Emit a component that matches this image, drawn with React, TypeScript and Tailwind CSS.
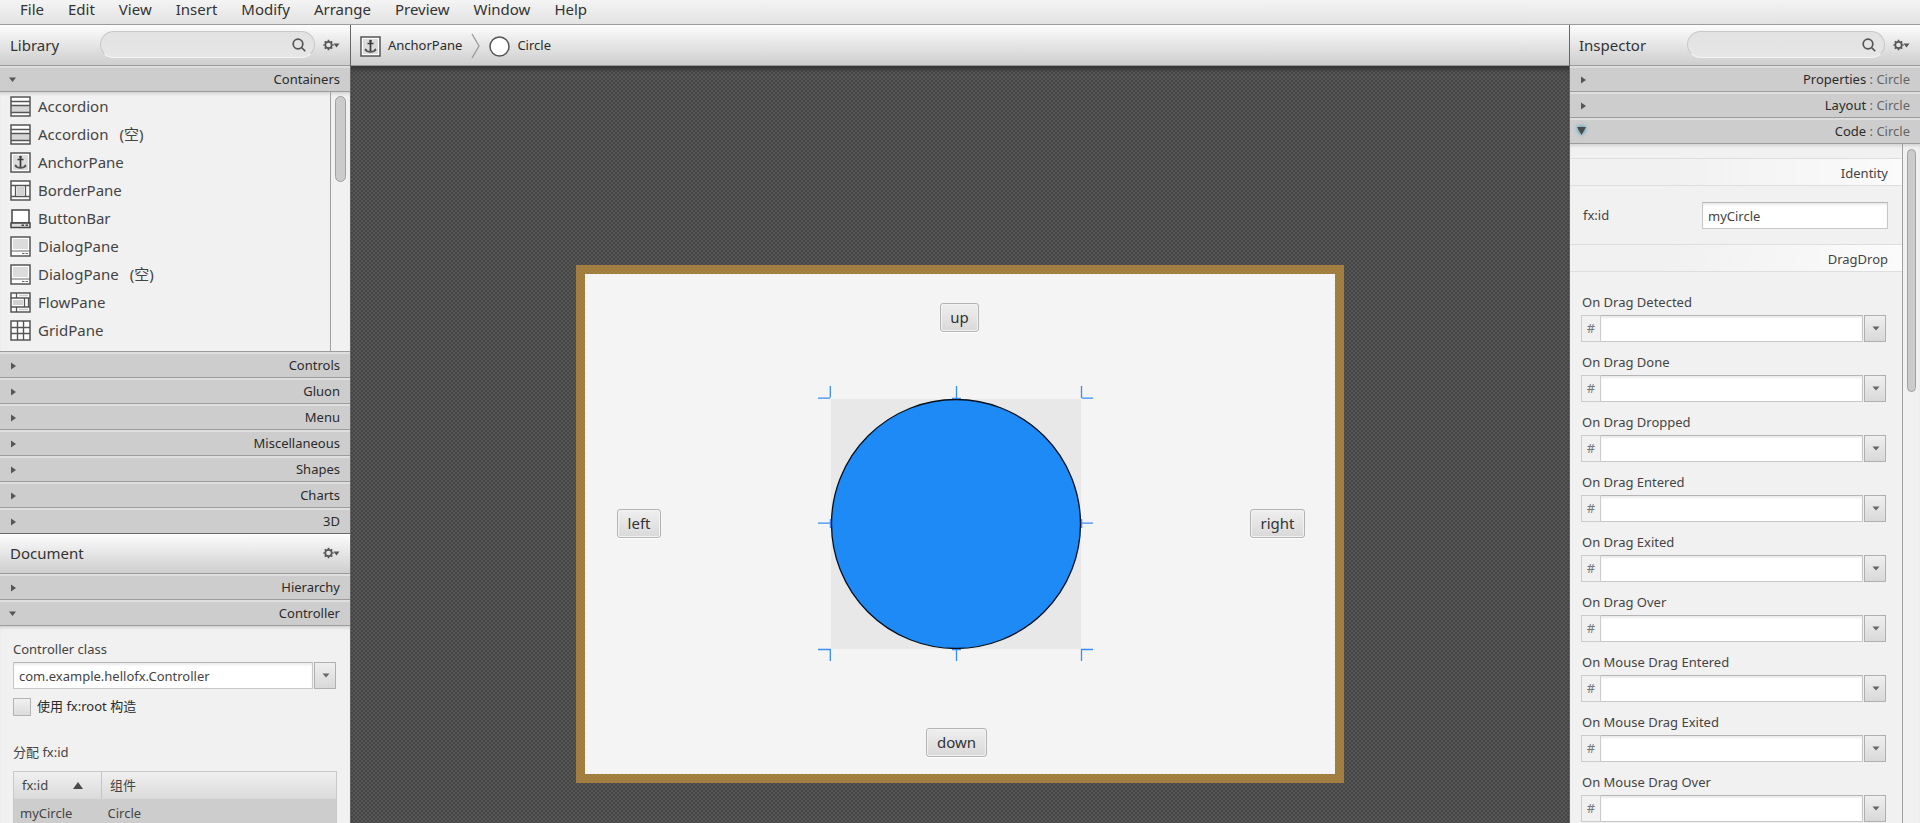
import React from "react";

const menus = ["File", "Edit", "View", "Insert", "Modify", "Arrange", "Preview", "Window", "Help"];

type IconKind = "accordion" | "anchor" | "border" | "buttonbar" | "dialog" | "flow" | "grid" | "circle";

const containers: { name: string; empty?: boolean; icon: IconKind }[] = [
  { name: "Accordion", icon: "accordion" },
  { name: "Accordion", empty: true, icon: "accordion" },
  { name: "AnchorPane", icon: "anchor" },
  { name: "BorderPane", icon: "border" },
  { name: "ButtonBar", icon: "buttonbar" },
  { name: "DialogPane", icon: "dialog" },
  { name: "DialogPane", empty: true, icon: "dialog" },
  { name: "FlowPane", icon: "flow" },
  { name: "GridPane", icon: "grid" },
];

const sections = ["Controls", "Gluon", "Menu", "Miscellaneous", "Shapes", "Charts", "3D"];

const events = [
  "On Drag Detected",
  "On Drag Done",
  "On Drag Dropped",
  "On Drag Entered",
  "On Drag Exited",
  "On Drag Over",
  "On Mouse Drag Entered",
  "On Mouse Drag Exited",
  "On Mouse Drag Over",
];

function NodeIcon({ kind }: { kind: IconKind }) {
  const frame = <rect x="1" y="1" width="19" height="19" fill="#fff" stroke="#555" strokeWidth="1.5" />;
  return (
    <svg viewBox="0 0 21 21" className="size-[21px] shrink-0" aria-hidden="true">
      {kind !== "circle" && kind !== "buttonbar" && frame}
      {kind === "accordion" && (
        <g stroke="#555" strokeWidth="1.3">
          <rect x="2" y="10" width="17" height="6" fill="#d6d6d6" stroke="none" />
          <path d="M1 5.5H20M1 9.5H20M1 16.5H20" />
        </g>
      )}
      {kind === "anchor" && (
        <g>
          <rect x="3" y="3" width="15" height="15" fill="#dcdcdc" />
          <path d="M10.5 4V16M7.5 7.5H13.5" fill="none" stroke="#3a3a3a" strokeWidth="1.7" />
          <path d="M5.3 13.5C7 16.6 14 16.6 15.7 13.5" fill="none" stroke="#555" strokeWidth="1.6" />
          <circle cx="10.5" cy="5" r="1.2" fill="#3a3a3a" />
          <path d="M4.5 14.5L5.3 12.2L7.3 14ZM16.5 14.5L15.7 12.2L13.7 14Z" fill="#555" />
        </g>
      )}
      {kind === "border" && (
        <g stroke="#555" strokeWidth="1.3">
          <path d="M1 5.5H20M1 16.5H20M5.500 5V17M15.500 5V17" />
          <rect x="7" y="7" width="7" height="8" fill="#d2d2d2" stroke="none" />
        </g>
      )}
      {kind === "buttonbar" && (
        <g stroke="#444" strokeWidth="1.5">
          <rect x="2" y="2" width="17" height="13" fill="#fff" />
          <rect x="1" y="15" width="19" height="4.500" fill="#ddd" />
          <path d="M11.500 17.200H14M15.500 17.200H18" />
        </g>
      )}
      {kind === "dialog" && (
        <g stroke="#666" strokeWidth="1.2">
          <rect x="3" y="3" width="15" height="10" fill="#dcdcdc" stroke="none" />
          <path d="M1 15H20M12 17.500H14.500M15.500 17.500H18" />
        </g>
      )}
      {kind === "flow" && (
        <g stroke="#555" strokeWidth="1.3">
          <path d="M1 6H20M1 15H20M6.500 1V6M14.500 6V15M18.500 6V15M6.500 15V20" />
          <rect x="3" y="8" width="10" height="5" fill="#d2d2d2" stroke="none" />
          <path d="M9 3.500H18M9 17.500H18" stroke="#ccc" />
        </g>
      )}
      {kind === "grid" && <path d="M1 7.500H20M1 13.500H20M7.500 1V20M13.500 1V20" stroke="#555" strokeWidth="1.4" />}
      {kind === "circle" && <circle cx="10.500" cy="10.500" r="9.500" fill="#fff" stroke="#555" strokeWidth="1.500" />}
    </svg>
  );
}

function GearButton({ label }: { label: string }) {
  return (
    <button aria-label={label} className="flex h-5 w-[18px] shrink-0 items-center">
      <svg viewBox="0 0 18 12" className="h-3 w-[18px]">
        <circle cx="5.500" cy="6" r="3.200" fill="none" stroke="#555" strokeWidth="1.700" />
        <path
          d="M5.500 0.800V2.200M5.500 9.800V11.200M0.300 6H1.700M9.300 6H10.700M1.800 2.300L2.800 3.300M8.200 8.700L9.200 9.700M9.200 2.300L8.200 3.300M2.800 8.700L1.800 9.700"
          stroke="#555"
          strokeWidth="1.700"
        />
        <path d="M10.500 4.500H16.500L13.500 8.500Z" fill="#555" />
      </svg>
    </button>
  );
}

function SearchField({ label }: { label: string }) {
  return (
    <label className="flex h-[27px] items-center rounded-full border border-[#c8c8c8] border-b-[#f4f4f4] bg-gradient-to-b from-[#e2e2e2] to-[#e6e6e6] pr-2 pl-3">
      <input aria-label={label} className="h-5 min-w-0 flex-1 bg-transparent text-[13px] outline-none" />
      <svg viewBox="0 0 14 14" className="size-[14px] shrink-0" fill="none" stroke="#555" strokeWidth="1.700">
        <circle cx="6" cy="6" r="4.800" />
        <path d="M9.500 9.500L13.200 13.200" />
      </svg>
    </label>
  );
}

function SectionTitle({
  title,
  subject,
  open,
  focused,
  last,
}: {
  title: string;
  subject?: string;
  open?: boolean;
  focused?: boolean;
  last?: boolean;
}) {
  return (
    <button
      aria-expanded={!!open}
      className={`flex h-[26px] w-full shrink-0 items-center justify-between border-t-2 border-b border-t-[#dedede] bg-[#cdcdcd] pr-[10px] pl-2 text-[13px] text-[#2b2b2b] ${
        last ? "border-b-[#6a6a6a]" : "border-b-[#9c9c9c]"
      }`}
    >
      <svg viewBox="0 0 10 10" className={focused ? "size-[10px] overflow-visible drop-shadow-[0_0_2px_#0096c9]" : "size-[10px]"}>
        {open ? (
          <path d={focused ? "M-1 0H8L3.500 8Z" : "M1 2.500H8L4.500 7Z"} fill={focused ? "#4a4a4a" : "#555"} />
        ) : (
          <path d="M3 1.500L8 5L3 8.500Z" fill="#555" />
        )}
      </svg>
      <span>
        {title}
        {subject && <span className="text-[#666]"> : {subject}</span>}
      </span>
    </button>
  );
}

function DropButton({ label }: { label: string }) {
  return (
    <button aria-label={label} className="ml-px flex h-[27px] w-[22px] shrink-0 items-center justify-center border border-[#b0b0b0] bg-gradient-to-b from-[#efefef] to-[#d9d9d9] pl-[2px]">
      <svg viewBox="0 0 8 5" className="h-[5px] w-2">
        <path d="M0.500 0.500H7.500L4 4.500Z" fill="#666" />
      </svg>
    </button>
  );
}

function GroupBand({ title }: { title: string }) {
  return (
    <h3 className="flex h-7 items-center justify-end border-y border-[#dedede] bg-gradient-to-r from-[#f1f1f1] from-30% to-[#fbfbfb] pt-1 pr-[14px] text-[13px] text-[#444]">
      {title}
    </h3>
  );
}

function EventField({ name }: { name: string }) {
  const id = name.toLowerCase().replace(/ /g, "-");
  return (
    <div className="h-[60px]">
      <label htmlFor={id} className="block h-[23px] pl-px text-[13px] leading-5 text-[#444]">
        {name}
      </label>
      <div className="flex">
        <span className="flex h-[27px] w-5 items-center justify-center border border-[#ccc] text-[13px] text-[#777]">#</span>
        <input
          id={id}
          className="h-[27px] min-w-0 flex-1 border border-l-0 border-[#c8c8c8] border-t-[#b5b5b5] bg-white px-1 text-[13px] shadow-[inset_0_2px_2px_#ececec] outline-none"
        />
        <DropButton label={`${name} options`} />
      </div>
    </div>
  );
}

function StageButton({ text, place }: { text: string; place: string }) {
  return (
    <button
      className={`absolute flex h-[29px] items-center justify-center rounded-[3px] border border-[#b4b4b4] bg-gradient-to-b from-[#efefef] to-[#d9d9d9] text-[15px] text-[#333] shadow-[0_1px_0_#fff,inset_0_0_0_1px_#f2f2f2] ${place}`}
    >
      {text}
    </button>
  );
}

function Stage() {
  return (
    <div className="relative h-[518px] w-[768px] shrink-0 border-9 border-[#d99d37]/60 bg-[#f4f4f4] bg-clip-padding">
      <StageButton text="up" place="top-[29px] left-[355px] w-[39px]" />
      <StageButton text="left" place="top-[235px] left-[32px] w-11" />
      <StageButton text="right" place="top-[235px] left-[665px] w-[55px]" />
      <StageButton text="down" place="top-[454px] left-[341px] w-[61px]" />
      <svg viewBox="0 0 280 280" className="absolute top-[110px] left-[231px] size-[280px]">
        <rect x="15" y="15" width="250" height="250" fill="#e8e8e8" />
        <circle cx="140" cy="140" r="124.500" fill="#1e8af5" stroke="#06101c" strokeWidth="1.300" />
        <g stroke="#3b8cf5" strokeWidth="1.300" fill="none">
          <path d="M2 14.200H14M14.300 2V13.500" />
          <path d="M265.500 2V14M266 14.200H277" />
          <path d="M2 265.500H14.300V277" />
          <path d="M277 265.500H265.500V277" />
          <path d="M140.500 2V14M136 14.300H145" />
          <path d="M140.500 266V277M136 265.700H145" />
          <path d="M2 139.200H14M14.400 135V144" />
          <path d="M265 139.200H277M265.600 135V144" />
        </g>
      </svg>
    </div>
  );
}

function PanelHeader({ children, height }: { children: React.ReactNode; height: string }) {
  return (
    <div className={`flex shrink-0 items-center border-b border-[#9c9c9c] bg-gradient-to-b from-[#fdfdfd] to-[#cecece] ${height}`}>
      {children}
    </div>
  );
}

export default function App() {
  return (
    <div className="flex h-screen flex-col overflow-hidden bg-[#f1f1f1] font-['Noto_Sans','Noto_Sans_CJK_SC',sans-serif] text-[#333]">
      <nav className="flex h-[25px] shrink-0 gap-6 border-b border-[#9c9c9c] bg-gradient-to-b from-[#f4f4f4] to-[#e3e3e3] pl-5 text-[15px] leading-[18px]">
        {menus.map((m) => (
          <button key={m} className="h-[18px]">
            {m}
          </button>
        ))}
      </nav>
      <div className="flex min-h-0 flex-1">
        <aside className="flex w-[351px] shrink-0 flex-col border-r border-[#666]">
          <section className="flex min-h-0 flex-[509_509_0%] flex-col">
            <PanelHeader height="h-[41px]">
              <h2 className="w-[100px] shrink-0 pl-[10px] text-[15px]">Library</h2>
              <div className="min-w-0 flex-1 pb-px">
                <SearchField label="Search library" />
              </div>
              <div className="pr-[9px] pl-2">
                <GearButton label="Library options" />
              </div>
            </PanelHeader>
            <SectionTitle title="Containers" open />
            <div className="flex min-h-0 flex-1 shadow-[inset_0_3px_3px_-1px_#d4d4d4]">
              <ul className="min-w-0 flex-1 overflow-hidden border-r border-[#a0a0a0]">
                {containers.map((c, i) => (
                  <li key={i} className="flex h-7 items-center gap-[7px] pl-[10px] text-[15px] text-[#444]">
                    <NodeIcon kind={c.icon} />
                    <span>{c.name}</span>
                    {c.empty && <span className="pl-1">(空)</span>}
                  </li>
                ))}
              </ul>
              <div className="w-[19px] pt-1 pl-1">
                <div className="h-[86px] w-[11px] rounded-full border border-[#a0a0a0] bg-[#cbcbcb]" />
              </div>
            </div>
            <div className="border-t border-[#9c9c9c]">
              {sections.map((s, i) => (
                <SectionTitle key={s} title={s} last={i === sections.length - 1} />
              ))}
            </div>
          </section>
          <section className="flex min-h-0 flex-[289_289_0%] flex-col">
            <PanelHeader height="h-10">
              <h2 className="flex-1 pb-px pl-[10px] text-[15px]">Document</h2>
              <div className="pr-[9px] pb-px">
                <GearButton label="Document options" />
              </div>
            </PanelHeader>
            <SectionTitle title="Hierarchy" />
            <SectionTitle title="Controller" open />
            <div className="min-h-0 flex-1 overflow-hidden px-[13px] pt-[13px] text-[13px] text-[#444] shadow-[inset_0_3px_3px_-1px_#d4d4d4]">
              <label htmlFor="controller-class" className="block h-[23px] leading-5">
                Controller class
              </label>
              <div className="flex pr-px">
                <input
                  id="controller-class"
                  defaultValue="com.example.hellofx.Controller"
                  className="h-[27px] min-w-0 flex-1 border border-[#c8c8c8] border-t-[#b5b5b5] bg-white px-[5px] shadow-[inset_0_2px_2px_#ececec] outline-none"
                />
                <DropButton label="Controller class options" />
              </div>
              <label className="mt-2 flex h-5 items-center gap-[6px] text-[#2b2b2b]">
                <input type="checkbox" className="size-[18px] appearance-none border border-[#b4b4b4] bg-gradient-to-b from-[#f0f0f0] to-[#dcdcdc]" />
                使用 fx:root 构造
              </label>
              <p className="mt-[25px] leading-5">分配 fx:id</p>
              <table className="mt-[9px] w-full border-collapse border border-[#c8c8c8] text-left">
                <thead>
                  <tr className="h-[27px] bg-gradient-to-b from-[#f0f0f0] to-[#dadada]">
                    <th className="w-[88px] border-r border-[#c4c4c4] pl-2 font-normal">
                      <span className="flex items-center gap-[25px]">
                        fx:id
                        <svg viewBox="0 0 10 7" className="h-[7px] w-[10px]">
                          <path d="M5 0L10 7H0Z" fill="#4a4a4a" />
                        </svg>
                      </span>
                    </th>
                    <th className="pl-2 font-normal">组件</th>
                  </tr>
                </thead>
                <tbody>
                  <tr className="h-[30px] bg-[#cdcdcd]">
                    <td className="pl-[6px]">myCircle</td>
                    <td className="pl-[6px]">Circle</td>
                  </tr>
                </tbody>
              </table>
            </div>
          </section>
        </aside>

        <main className="flex min-w-0 flex-1 flex-col">
          <PanelHeader height="h-[41px]">
            <div className="flex items-center pt-[2px] pl-[9px] text-[13px] text-[#2b2b2b]">
              <NodeIcon kind="anchor" />
              <span className="pl-[7px]">AnchorPane</span>
              <svg viewBox="0 0 10 26" className="mr-[8px] ml-[9px] h-[26px] w-[10px]" fill="none" stroke="#999" strokeWidth="1.300">
                <path d="M1 1L8 13L1 25" />
              </svg>
              <NodeIcon kind="circle" />
              <span className="pl-[7px]">Circle</span>
            </div>
          </PanelHeader>
          <div className="flex min-h-0 flex-1 justify-center overflow-hidden bg-[#4d4d4d] bg-[conic-gradient(#464646_25%,#575757_0_50%,#464646_0_75%,#575757_0)] bg-[length:4px_4px] pt-[199px] shadow-[inset_0_5px_5px_-2px_#333]">
            <Stage />
          </div>
        </main>

        <aside className="flex w-[351px] shrink-0 flex-col border-l border-[#666]">
          <PanelHeader height="h-[41px]">
            <h2 className="w-[117px] shrink-0 pl-[9px] text-[15px]">Inspector</h2>
            <div className="min-w-0 flex-1 pb-px">
              <SearchField label="Search inspector" />
            </div>
            <div className="pr-[9px] pl-2">
              <GearButton label="Inspector options" />
            </div>
          </PanelHeader>
          <SectionTitle title="Properties" subject="Circle" />
          <SectionTitle title="Layout" subject="Circle" />
          <SectionTitle title="Code" subject="Circle" open focused />
          <div className="flex min-h-0 flex-1 shadow-[inset_0_3px_3px_-1px_#d4d4d4]">
            <div className="min-w-0 flex-1 overflow-hidden border-r border-[#a0a0a0] pt-[14px]">
              <GroupBand title="Identity" />
              <div className="flex h-[58px] items-center justify-between pt-px pr-[14px] pl-[13px] text-[13px] text-[#444]">
                <label htmlFor="fx-id">fx:id</label>
                <input
                  id="fx-id"
                  defaultValue="myCircle"
                  className="h-[27px] w-[186px] border border-[#c8c8c8] border-t-[#b5b5b5] bg-white px-[5px] shadow-[inset_0_2px_2px_#ececec] outline-none"
                />
              </div>
              <GroupBand title="DragDrop" />
              <div className="pt-5 pr-4 pl-[11px]">
                {events.map((e) => (
                  <EventField key={e} name={e} />
                ))}
              </div>
            </div>
            <div className="w-[17px] pt-[5px] pl-1">
              <div className="h-[243px] w-[9px] rounded-full border border-[#a0a0a0] bg-[#cbcbcb]" />
            </div>
          </div>
        </aside>
      </div>
    </div>
  );
}
